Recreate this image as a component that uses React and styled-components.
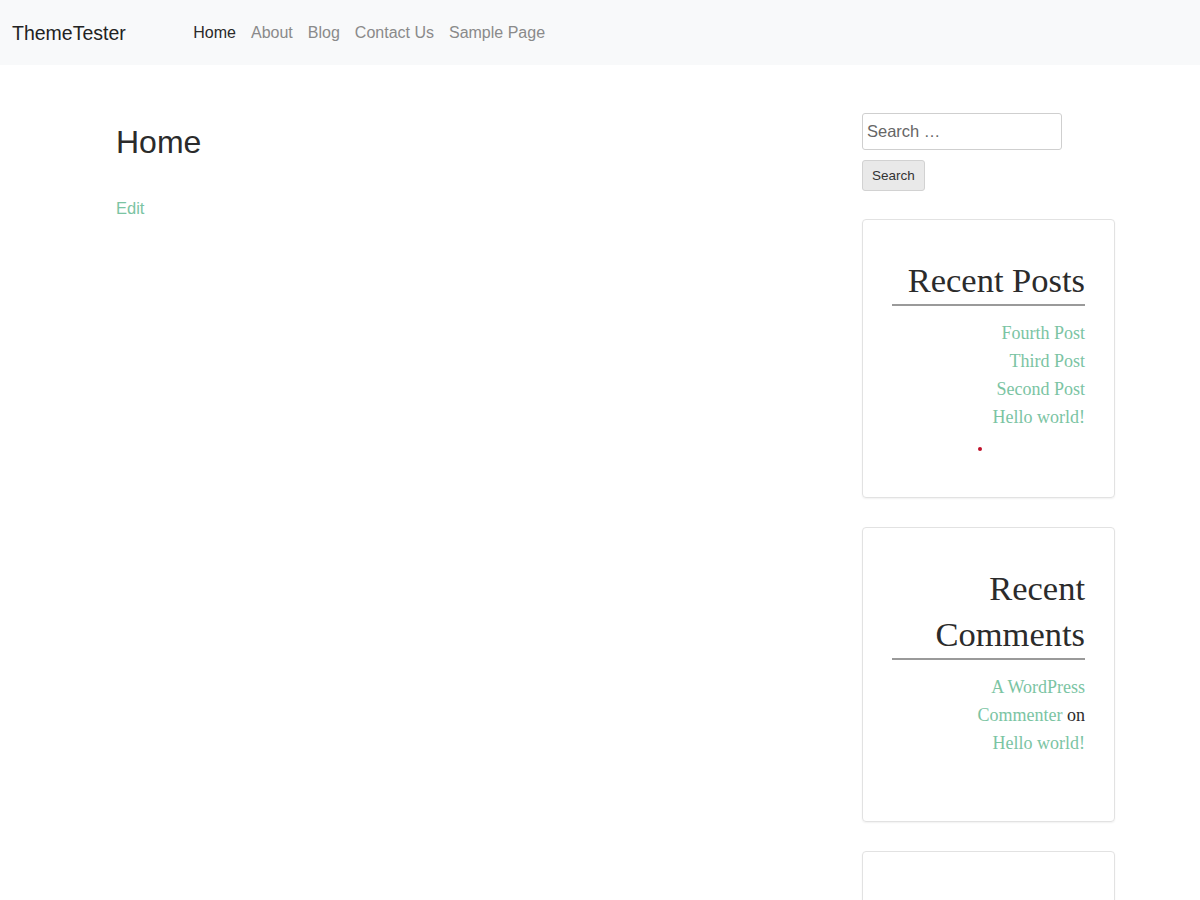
import React from "react";
import styled, { createGlobalStyle } from "styled-components";

const GlobalStyle = createGlobalStyle`
  * { box-sizing: border-box; }
  body {
    margin: 0;
    background: #fff;
    font-family: "Liberation Sans", Arial, sans-serif;
    color: #333;
  }
`;

const navLinks = ["Home", "About", "Blog", "Contact Us", "Sample Page"];
const recentPosts = ["Fourth Post", "Third Post", "Second Post", "Hello world!"];

export default function App() {
  return (
    <>
      <GlobalStyle />
      <Navbar>
        <Brand href="#">ThemeTester</Brand>
        <NavList>
          {navLinks.map((label, i) => (
            <NavLink key={label} href="#" $active={i === 0}>
              {label}
            </NavLink>
          ))}
        </NavList>
      </Navbar>

      <Container>
        <Main>
          <PageTitle>Home</PageTitle>
          <EditLink href="#">Edit</EditLink>
        </Main>

        <Sidebar>
          <SearchForm>
            <SearchInput placeholder="Search …" />
            <SearchButton type="button">Search</SearchButton>
          </SearchForm>

          <Widget $padBottom={46}>
            <WidgetTitle>Recent Posts</WidgetTitle>
            <WidgetList>
              {recentPosts.map((p) => (
                <li key={p}>
                  <GreenLink href="#">{p}</GreenLink>
                </li>
              ))}
            </WidgetList>
            <Dot />
          </Widget>

          <Widget $padBottom={64}>
            <WidgetTitle>Recent Comments</WidgetTitle>
            <WidgetList>
              <li>
                <GreenLink href="#">A WordPress Commenter</GreenLink> on{" "}
                <GreenLink href="#">Hello world!</GreenLink>
              </li>
            </WidgetList>
          </Widget>

          <Widget $padBottom={57}>
            <WidgetTitle>Archives</WidgetTitle>
            <WidgetList>
              <li>
                <GreenLink href="#">January 2020</GreenLink>
              </li>
            </WidgetList>
          </Widget>
        </Sidebar>
      </Container>
    </>
  );
}

const Navbar = styled.nav`
  display: flex;
  align-items: center;
  height: 65px;
  padding: 0 12px;
  background-color: #f8f9fa;
`;

const Brand = styled.a`
  font-size: 19.5px;
  color: #222;
  text-decoration: none;
  margin-right: 60px;
  padding-top: 1px;
`;

const NavList = styled.div`
  display: flex;
  align-items: center;
`;

const NavLink = styled.a`
  font-size: 16px;
  padding: 0 7.5px;
  text-decoration: none;
  color: ${(p) => (p.$active ? "#2a2a2a" : "#8a8a8a")};
`;

const Container = styled.div`
  display: flex;
  padding: 0 85px 0 116px;
`;

const Main = styled.main`
  flex: 1;
  padding-top: 55px;
`;

const PageTitle = styled.h1`
  margin: 0 0 29px;
  font-size: 32px;
  font-weight: 400;
  line-height: 45px;
  color: #2b2b2b;
`;

const EditLink = styled.a`
  font-size: 16.5px;
  line-height: 28px;
  color: #7bc4a3;
  text-decoration: none;
`;

const Sidebar = styled.aside`
  width: 253px;
  padding-top: 48px;
  display: flex;
  flex-direction: column;
  gap: 29px;
`;

const SearchForm = styled.form`
  display: flex;
  flex-direction: column;
  align-items: flex-start;
  gap: 10px;
  margin-bottom: -1px;
`;

const SearchInput = styled.input`
  width: 200px;
  height: 37px;
  padding: 0 4px;
  border: 1px solid #cfcfcf;
  border-radius: 3px;
  font-family: inherit;
  font-size: 16.5px;
  color: #555;
  &::placeholder {
    color: #666;
  }
`;

const SearchButton = styled.button`
  height: 31px;
  padding: 0 9px;
  border: 1px solid #d2d2d2;
  border-radius: 3px;
  background: #e9e9e9;
  font-family: inherit;
  font-size: 13.5px;
  color: #333;
`;

const Widget = styled.section`
  border: 1px solid #e2e2e2;
  border-radius: 4px;
  box-shadow: 0 1px 2px rgba(0, 0, 0, 0.06);
  padding: 37px 29px ${(p) => p.$padBottom}px 29px;
  text-align: right;
  font-family: "Liberation Serif", "Times New Roman", serif;
`;

const WidgetTitle = styled.h2`
  margin: 0 0 13px;
  padding-bottom: 1px;
  border-bottom: 2px solid #9a9a9a;
  font-size: 34.5px;
  font-weight: 400;
  line-height: 46px;
  color: #2b2b2b;
`;

const WidgetList = styled.ul`
  list-style: none;
  margin: 0 0 0 auto;
  padding: 0;
  max-width: 140px;
  font-size: 18px;
  line-height: 28px;
  color: #2b2b2b;
`;

const GreenLink = styled.a`
  color: #7bc4a3;
  text-decoration: none;
`;

const Dot = styled.div`
  width: 4px;
  height: 4px;
  margin: 16px 0 0 86px;
  border-radius: 50%;
  background: #c0102a;
`;
